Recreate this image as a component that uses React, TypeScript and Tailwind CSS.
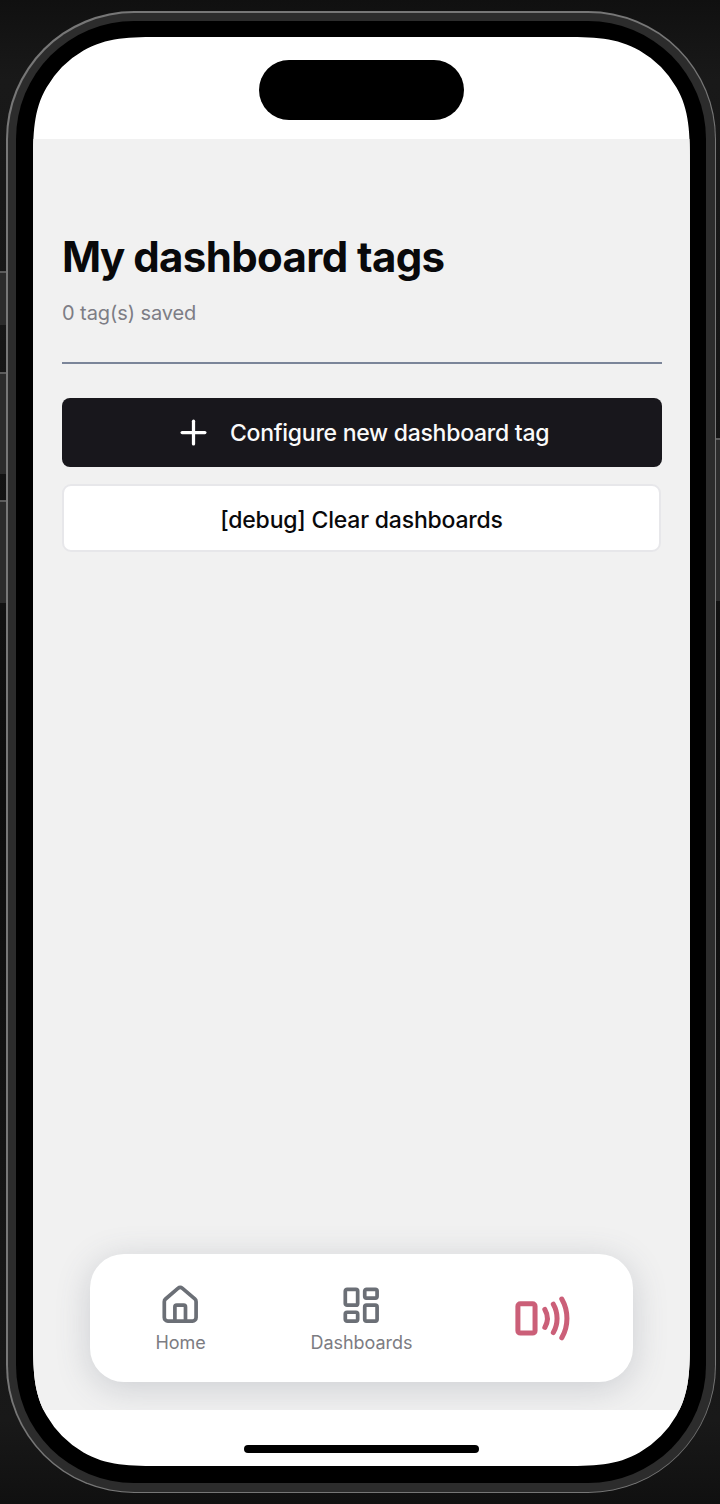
import type { ReactNode } from "react";
import { House, LayoutDashboard, Plus, SmartphoneNfc } from "lucide-react";

/** Rounded rectangle whose circular corners ease gradually into the straight edges. */
function softCorners(w: number, h: number, r: number): string {
  const a = 1.3 * r;
  const b = 0.95 * r;
  const c = 0.725 * r;
  const n = 0.004 * r;
  const d = 0.5 * r;
  const e = 0.134 * r;
  return `path("M${a} 0H${w - a}C${w - b} 0 ${w - c} ${n} ${w - d} ${e}A${r} ${r} 0 0 1 ${w - e} ${d}C${w - n} ${c} ${w} ${b} ${w} ${a}V${h - a}C${w} ${h - b} ${w - n} ${h - c} ${w - e} ${h - d}A${r} ${r} 0 0 1 ${w - d} ${h - e}C${w - c} ${h - n} ${w - b} ${h} ${w - a} ${h}H${a}C${b} ${h} ${c} ${h - n} ${d} ${h - e}A${r} ${r} 0 0 1 ${e} ${h - d}C${n} ${h - c} 0 ${h - b} 0 ${h - a}V${a}C0 ${b} ${n} ${c} ${e} ${d}A${r} ${r} 0 0 1 ${d} ${e}C${c} ${n} ${b} 0 ${a} 0Z")`;
}

function NavItem({ icon, label }: { icon: ReactNode; label: string }) {
  return (
    <a className="flex flex-1 flex-col items-center pt-[30px] text-[#6b6f76]">
      {icon}
      <span className="mt-[5px] text-[18px] leading-[24px] tracking-[-0.05px] text-[#7c7c82]">{label}</span>
    </a>
  );
}

function Screen() {
  return (
    <div
      className="flex h-[1429px] w-[657px] flex-col bg-white"
      style={{ clipPath: softCorners(657, 1429, 101) }}
    >
      <header className="flex h-[102px] shrink-0 justify-center pt-[23px]">
        <div className="h-[60px] w-[205px] rounded-full bg-black" />
      </header>

      <main className="flex flex-1 flex-col overflow-hidden bg-[#f1f1f1] px-[29px] pt-[93px]">
        <h1 className="text-[42px] leading-[50px] font-bold tracking-[-0.63px] whitespace-nowrap text-[#09090b]">
          <span className="tracking-[-1.5px]">My</span> dashboard tags
        </h1>
        <p className="mt-[18px] text-[20px] leading-[26px] tracking-[-0.08px] text-[#7d7d85]">0 tag(s) saved</p>
        <div className="mt-[36px] h-[2px] w-[600px] bg-[#7b8599]" />

        <button className="mt-[34px] flex h-[69px] w-[600px] shrink-0 items-center rounded-[8px] bg-[#18171c] pl-[112px] text-white">
          <Plus size={39} strokeWidth={2} />
          <span className="ml-[17px] pt-[2px] text-[23px] font-medium tracking-[-0.27px] whitespace-nowrap text-[#fafafa]">
            Configure new dashboard tag
          </span>
        </button>
        <button className="mt-[17px] flex h-[68px] w-[599px] shrink-0 items-center justify-center rounded-[9px] border-2 border-[#e7e7ea] bg-white pt-[5px] text-[23px] font-medium tracking-[-0.2px] text-[#09090b]">
          [debug] Clear dashboards
        </button>

        <nav className="mt-auto mb-[28px] ml-[28px] flex h-[128px] w-[543px] shrink-0 rounded-[34px] bg-white shadow-[0_6px_34px_rgba(75,80,100,0.22)]">
          <NavItem icon={<House size={42.4} strokeWidth={2.1} />} label="Home" />
          <NavItem icon={<LayoutDashboard size={42.4} strokeWidth={2.1} />} label="Dashboards" />
          <a className="flex flex-1 items-center justify-center text-[#cb5f78]">
            <SmartphoneNfc size={58.8} strokeWidth={2.05} />
          </a>
        </nav>
      </main>

      <footer className="flex h-[56px] shrink-0 justify-center pt-[35px]">
        <div className="h-[8px] w-[235px] rounded-full bg-black" />
      </footer>
    </div>
  );
}

export default function App() {
  return (
    <div className="flex h-[1504px] w-[720px] overflow-hidden bg-[linear-gradient(to_bottom,#101010,#191919_80px,#171717_300px,#111111_620px,#0d0d0d_800px,#171717_1300px,#191919_1420px,#101010)] font-['Inter','Liberation_Sans',sans-serif]">
      <div className="w-[6px] shrink-0 pt-[271px]">
        <div className="h-[54px] border-t-2 border-[#5c5c5c] bg-[#2c2c2c]" />
        <div className="mt-[47px] h-[102px] border-t-2 border-[#5c5c5c] bg-[#2c2c2c]" />
        <div className="mt-[26px] h-[103px] border-t-2 border-[#5c5c5c] bg-[#2c2c2c]" />
      </div>
      <div className="shrink-0 pt-[11px]">
        <div className="h-[1482px] w-[710px] rounded-[128px] bg-[#777777] p-[1.5px]">
          <div className="h-full rounded-[126.5px] bg-[#2c2c2c] p-[8.5px]">
            <div className="h-full rounded-[118px] bg-black pt-4 pl-[17px]">
              <Screen />
            </div>
          </div>
        </div>
      </div>
      <div className="w-[4px] shrink-0 pt-[438px]">
        <div className="h-[163px] border-t-2 border-[#5c5c5c] bg-[#2c2c2c]" />
      </div>
    </div>
  );
}
